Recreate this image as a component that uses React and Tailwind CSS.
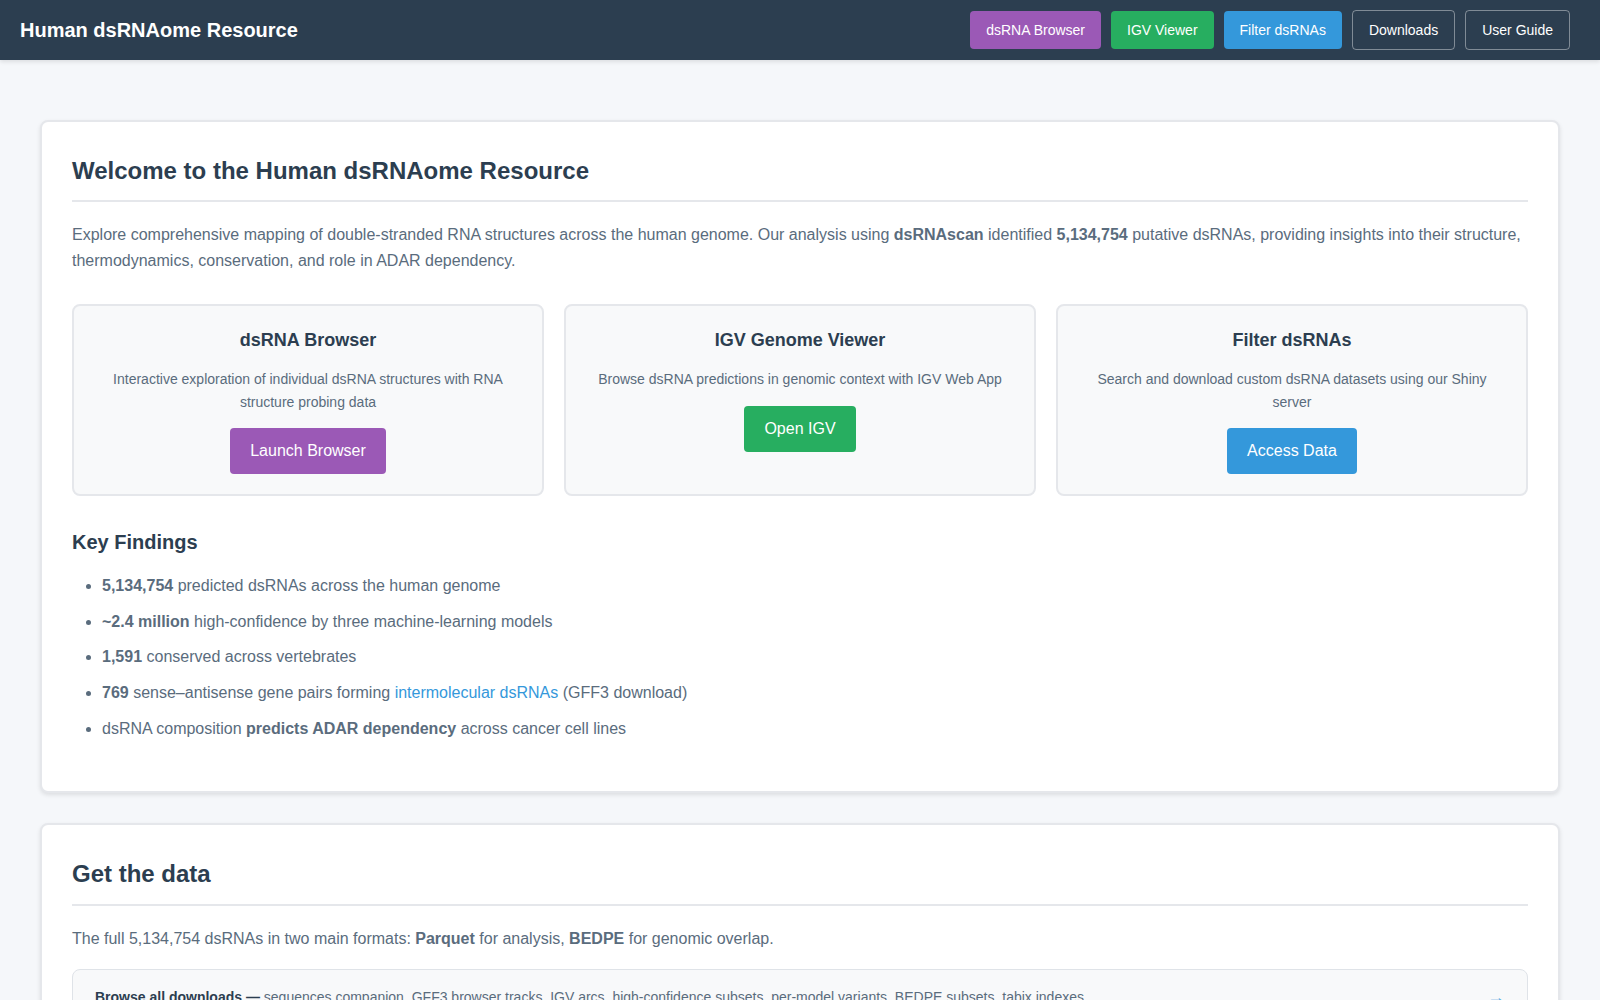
const navLinks = [
  { label: 'dsRNA Browser', className: 'bg-[#9b59b6]' },
  { label: 'IGV Viewer', className: 'bg-[#27ae60]' },
  { label: 'Filter dsRNAs', className: 'bg-[#3498db]' },
  { label: 'Downloads', className: 'border border-white/40' },
  { label: 'User Guide', className: 'border border-white/40' },
];

const features = [
  {
    title: 'dsRNA Browser',
    text: 'Interactive exploration of individual dsRNA structures with RNA structure probing data',
    action: 'Launch Browser',
    color: 'bg-[#9b59b6]',
  },
  {
    title: 'IGV Genome Viewer',
    text: 'Browse dsRNA predictions in genomic context with IGV Web App',
    action: 'Open IGV',
    color: 'bg-[#27ae60]',
  },
  {
    title: 'Filter dsRNAs',
    text: 'Search and download custom dsRNA datasets using our Shiny server',
    action: 'Access Data',
    color: 'bg-[#3498db]',
  },
];

function SectionTitle({ children }) {
  return (
    <h2 className="mb-5 border-b-2 border-[#e5e7eb] pb-[10px] text-2xl leading-[38.4px] font-bold text-[#2c3e50]">
      {children}
    </h2>
  );
}

function FeatureCard({ title, text, action, color }) {
  return (
    <div className="rounded-lg border-2 border-[#e5e7eb] bg-[#f8f9fa] p-5 text-center">
      <h3 className="mb-[14px] text-lg leading-[28.8px] font-bold text-[#2c3e50]">{title}</h3>
      <p className="mb-[15px] text-sm leading-[22.4px] text-[#5a6c7d]">{text}</p>
      <a href="#" className={`inline-block rounded px-5 py-3 text-base leading-[22px] text-white ${color}`}>
        {action}
      </a>
    </div>
  );
}

export default function App() {
  return (
    <div className="h-screen overflow-hidden bg-[#f5f7fa] font-['Liberation_Sans',Arial,sans-serif]">
      <header className="flex h-[60px] items-center justify-between bg-[#2c3e50] pl-5 pr-[30px] shadow-[0_2px_4px_rgba(0,0,0,0.1)]">
        <h1 className="text-xl font-bold text-white">Human dsRNAome Resource</h1>
        <nav className="flex items-center gap-[10px]">
          {navLinks.map((link) => (
            <a
              key={link.label}
              href="#"
              className={`rounded px-4 py-[10px] text-sm leading-[18px] text-white ${link.className}`}
            >
              {link.label}
            </a>
          ))}
        </nav>
      </header>

      <main className="px-10 pt-[60px]">
        <section className="mb-[30px] rounded-lg border-2 border-[#e5e7eb] bg-white p-[30px] shadow-[0_2px_4px_rgba(0,0,0,0.1)]">
          <SectionTitle>Welcome to the Human dsRNAome Resource</SectionTitle>
          <p className="text-base leading-[25.6px] text-[#5a6c7d]">
            Explore comprehensive mapping of double-stranded RNA structures across the human genome. Our analysis using{' '}
            <strong>dsRNAscan</strong> identified <strong>5,134,754</strong> putative dsRNAs, providing insights into their
            structure, thermodynamics, conservation, and role in ADAR dependency.
          </p>

          <div className="mt-[30px] grid grid-cols-3 gap-5">
            {features.map((feature) => (
              <FeatureCard key={feature.title} {...feature} />
            ))}
          </div>

          <h3 className="mb-[15px] mt-[30px] text-xl leading-8 font-bold text-[#2c3e50]">Key Findings</h3>
          <ul className="list-disc pl-[30px] pb-[10px] text-base leading-[25.6px] text-[#5a6c7d]">
            <li className="mb-[10px]">
              <strong>5,134,754</strong> predicted dsRNAs across the human genome
            </li>
            <li className="mb-[10px]">
              <strong>~2.4 million</strong> high-confidence by three machine-learning models
            </li>
            <li className="mb-[10px]">
              <strong>1,591</strong> conserved across vertebrates
            </li>
            <li className="mb-[10px]">
              <strong>769</strong> sense–antisense gene pairs forming{' '}
              <a href="#" className="text-[#3498db]">intermolecular dsRNAs</a> (GFF3 download)
            </li>
            <li className="mb-[10px]">
              dsRNA composition <strong>predicts ADAR dependency</strong> across cancer cell lines
            </li>
          </ul>
        </section>

        <section className="rounded-lg border-2 border-[#e5e7eb] bg-white p-[30px] shadow-[0_2px_4px_rgba(0,0,0,0.1)]">
          <SectionTitle>Get the data</SectionTitle>
          <p className="text-base leading-[25.6px] text-[#5a6c7d]">
            The full 5,134,754 dsRNAs in two main formats: <strong>Parquet</strong> for analysis, <strong>BEDPE</strong> for
            genomic overlap.
          </p>
          <a
            href="#"
            className="mt-[18px] flex items-center justify-between rounded-lg border border-[#dfe3e8] bg-[#f8f9fa] px-[22px] py-[13px] text-sm text-[#5a6c7d]"
          >
            <span>
              <strong className="text-[#2c3e50]">Browse all downloads —</strong> sequences companion, GFF3 browser tracks, IGV arcs, high-confidence subsets, per-model variants, BEDPE subsets, tabix indexes
            </span>
            <span className="text-lg text-[#3498db]">→</span>
          </a>
        </section>
      </main>
    </div>
  );
}
